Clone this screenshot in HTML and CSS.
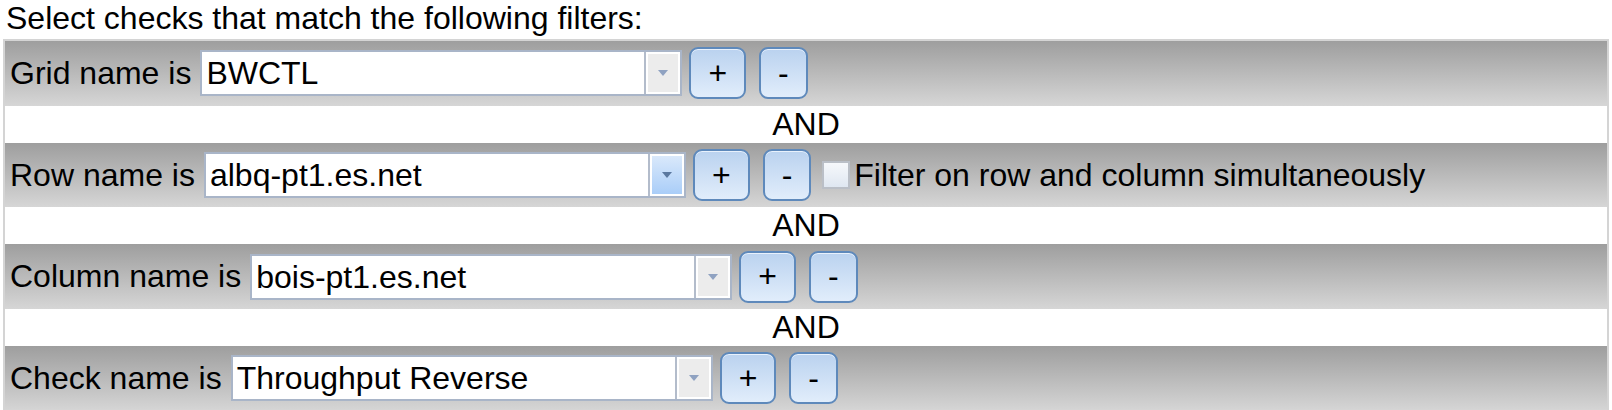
FILE: index.html
```html
<!DOCTYPE html>
<html lang="en">
<head>
    <meta charset="UTF-8">
    <title>Select checks</title>
    <link rel="stylesheet" href="styles.css">
</head>
<body>
    <p class="title">Select checks that match the following filters:</p>
    <div class="filters">
        <div class="filter">
            <span class="label">Grid name is</span>
            <div class="combo"><span class="value">BWCTL</span><span class="arrow"></span></div>
            <button class="btn">+</button>
            <button class="btn">-</button>
        </div>
        <div class="and">AND</div>
        <div class="filter">
            <span class="label">Row name is</span>
            <div class="combo"><span class="value">albq-pt1.es.net</span><span class="arrow active"></span></div>
            <button class="btn">+</button>
            <button class="btn">-</button>
            <label class="check"><span class="box"></span>Filter on row and column simultaneously</label>
        </div>
        <div class="and">AND</div>
        <div class="filter">
            <span class="label">Column name is</span>
            <div class="combo"><span class="value">bois-pt1.es.net</span><span class="arrow"></span></div>
            <button class="btn">+</button>
            <button class="btn">-</button>
        </div>
        <div class="and">AND</div>
        <div class="filter">
            <span class="label">Check name is</span>
            <div class="combo"><span class="value">Throughput Reverse</span><span class="arrow"></span></div>
            <button class="btn">+</button>
            <button class="btn">-</button>
        </div>
    </div>
</body>
</html>
```

FILE: styles.css
```css
body {
    margin: 0 3px;
    font-family: "Liberation Sans", Arial, sans-serif;
    font-size: 32px;
    color: #000;
    background-color: #fff;
}
.title {
    margin: 0 0 2px 3px;
    line-height: 37px;
}
.filters {
    border: 2px solid #d4d4d4;
    border-bottom: none;
}
.filter {
    display: flex;
    align-items: center;
    height: 64.7px;
    padding-left: 5px;
    background: linear-gradient(#9e9e9e, #d6d6d6);
}
.and {
    height: 37px;
    line-height: 37px;
    text-align: center;
    background-color: #fff;
}
.combo {
    display: flex;
    width: 482px;
    height: 46px;
    box-sizing: border-box;
    margin-left: 9px;
    border: 2px solid #a9b5c8;
    background-color: #fff;
}
.combo .value {
    flex: 1;
    padding-left: 4px;
    line-height: 42px;
    white-space: nowrap;
}
.combo .arrow {
    position: relative;
    width: 34px;
    border-left: 2px solid #b3bccb;
    background-color: #ececec;
    box-shadow: inset 0 0 0 2px #fff;
}
.combo .arrow::after {
    content: "";
    position: absolute;
    left: 12px;
    top: 18px;
    border-left: 5px solid transparent;
    border-right: 5px solid transparent;
    border-top: 6px solid #8fa2c1;
}
.combo .arrow.active {
    background: linear-gradient(#dceafb, #a7ccf8);
}
.combo .arrow.active::after {
    border-top-color: #5a789f;
}
.btn {
    height: 52px;
    margin-left: 7px;
    padding: 0 17px;
    font-family: inherit;
    font-size: 32px;
    color: #000;
    border: 2px solid #5e89bb;
    border-radius: 9px;
    background: linear-gradient(#bad2ef, #e1edfb);
    box-shadow: inset 0 1px 0 #e8f1fc;
}
.btn + .btn {
    margin-left: 13px;
}
.check {
    display: flex;
    align-items: center;
    margin-left: 11px;
}
.check .box {
    width: 28px;
    height: 28px;
    box-sizing: border-box;
    margin-right: 4px;
    border: 2px solid #babfc7;
    background: linear-gradient(#f6f8fb, #dfe7f1);
}
```
